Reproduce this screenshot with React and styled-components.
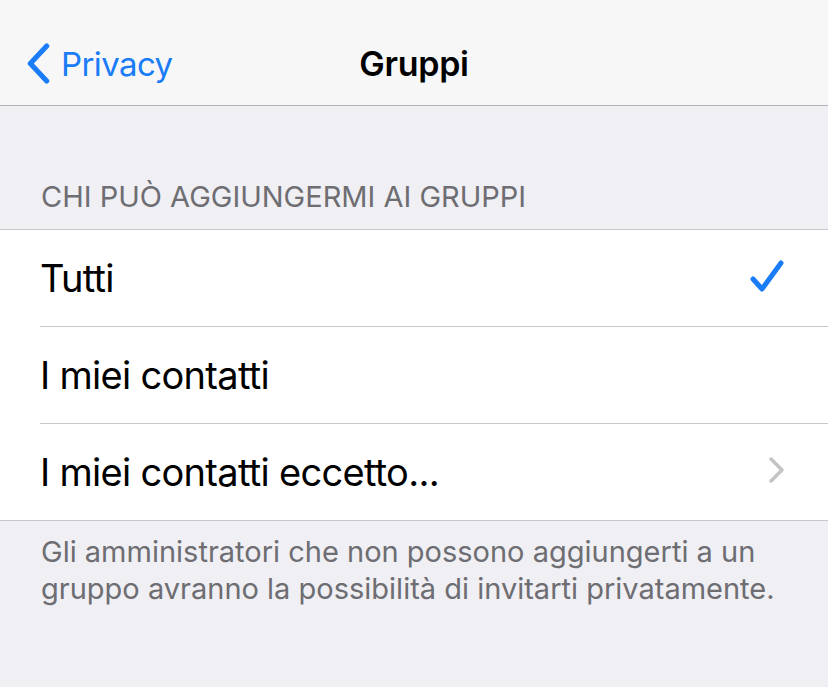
import React from "react";
import styled, { createGlobalStyle } from "styled-components";

const GlobalStyle = createGlobalStyle`
  html, body {
    margin: 0;
    padding: 0;
    background: #efeff4;
  }
  body {
    font-family: Inter, "Noto Sans", "Liberation Sans", sans-serif;
    -webkit-font-smoothing: antialiased;
  }
`;

const Screen = styled.div`
  width: 828px;
  height: 687px;
  background: #efeff4;
  overflow: hidden;
`;

const NavBar = styled.header`
  height: 106px;
  padding-top: 22px;
  background: #f7f7f7;
  border-bottom: 1px solid #b2b2b2;
  box-sizing: border-box;
  display: grid;
  grid-template-columns: 1fr auto 1fr;
  align-items: center;
`;

const BackButton = styled.div`
  display: flex;
  align-items: center;
  gap: 10px;
  padding-left: 26px;
  color: #1a7cf6;
  font-size: 33px;
  letter-spacing: -0.6px;
`;

const Title = styled.h1`
  margin: 0;
  font-size: 34px;
  font-weight: 600;
  color: #000;
  letter-spacing: -0.3px;
`;

const SectionHeader = styled.div`
  padding: 76px 41px 17px;
  font-size: 29px;
  color: #6d6d72;
  line-height: 30px;
`;

const Group = styled.ul`
  list-style: none;
  margin: 0;
  padding: 0;
  background: #fff;
  border-top: 1px solid #c8c7cc;
  border-bottom: 1px solid #c8c7cc;
`;

const Row = styled.li`
  height: 96px;
  margin-left: 40px;
  padding-right: 44px;
  display: flex;
  align-items: center;
  justify-content: space-between;
  border-bottom: ${(p) => (p.$last ? "none" : "1px solid #c8c7cc")};
`;

const RowLabel = styled.span`
  font-size: 38px;
  color: #000;
  letter-spacing: -0.7px;
`;

const Footer = styled.p`
  margin: 0;
  padding: 12px 41px 0;
  font-size: 29px;
  line-height: 37px;
  color: #6d6d72;
`;

const Chevron = ({ color, width, height, strokeWidth }) => (
  <svg width={width} height={height} viewBox="0 0 24 40" fill="none">
    <path
      d="M20 3 L4 20 L20 37"
      stroke={color}
      strokeWidth={strokeWidth}
      strokeLinecap="round"
      strokeLinejoin="round"
    />
  </svg>
);

const Check = () => (
  <svg width="34" height="32" viewBox="0 0 34 32" fill="none" style={{ marginTop: -4 }}>
    <path
      d="M3 19 L12 29 L31 3"
      stroke="#1a7cf6"
      strokeWidth="5"
      strokeLinecap="round"
      strokeLinejoin="round"
    />
  </svg>
);

const Disclosure = () => (
  <svg width="18" height="28" viewBox="0 0 18 28" fill="none" style={{ marginTop: -5, marginRight: -2 }}>
    <path
      d="M3 3 L14 14 L3 25"
      stroke="#c4c4c7"
      strokeWidth="3.5"
      strokeLinecap="round"
      strokeLinejoin="round"
    />
  </svg>
);

const options = [
  { label: "Tutti", accessory: "check" },
  { label: "I miei contatti" },
  { label: "I miei contatti eccetto...", accessory: "chevron" },
];

const App = () => {
  return (
    <>
      <GlobalStyle />
      <Screen>
        <NavBar>
          <BackButton>
            <Chevron color="#1a7cf6" width={25} height={41} strokeWidth={5} />
            Privacy
          </BackButton>
          <Title>Gruppi</Title>
          <span />
        </NavBar>
        <SectionHeader>CHI PUÒ AGGIUNGERMI AI GRUPPI</SectionHeader>
        <Group>
          {options.map((o, i) => (
            <Row key={o.label} $last={i === options.length - 1}>
              <RowLabel>{o.label}</RowLabel>
              {o.accessory === "check" && <Check />}
              {o.accessory === "chevron" && <Disclosure />}
            </Row>
          ))}
        </Group>
        <Footer>
          Gli amministratori che non possono aggiungerti a un gruppo avranno la
          possibilità di invitarti privatamente.
        </Footer>
      </Screen>
    </>
  );
};

export default App;
